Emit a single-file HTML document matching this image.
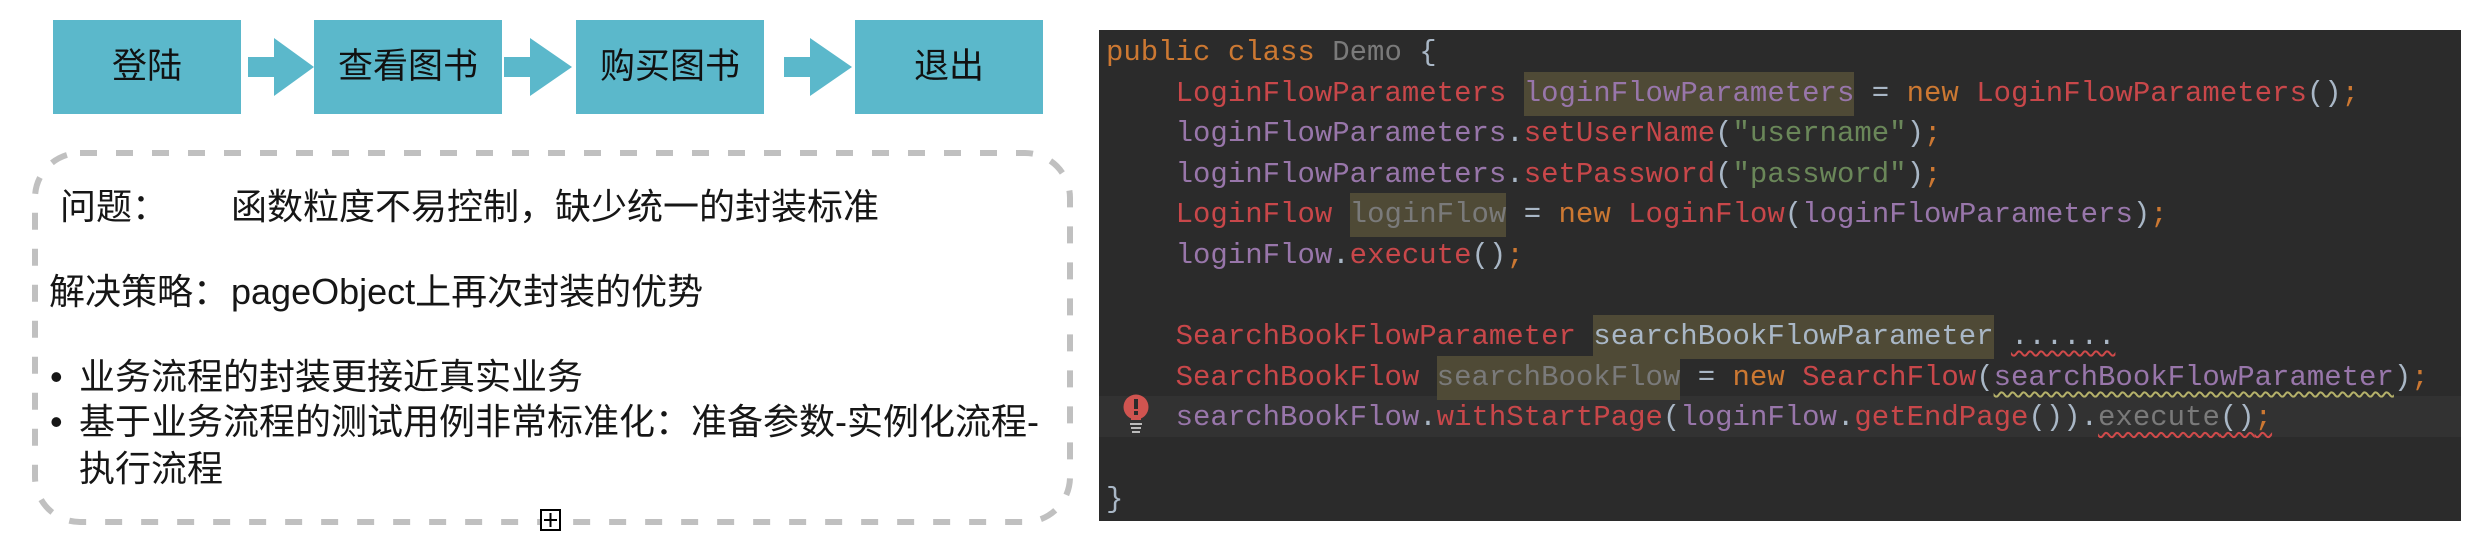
<!DOCTYPE html>
<html><head><meta charset="utf-8"><style>
body{margin:0;width:2490px;height:554px;background:#fff;position:relative;overflow:hidden;font-family:"Liberation Sans","Noto Sans CJK SC",sans-serif;}
.box{position:absolute;top:20px;width:188px;height:94px;background:#5bb8cb;color:#111;font-size:35px;line-height:94px;text-align:center;}
.t{position:absolute;font-size:36px;color:#161616;white-space:nowrap;line-height:40px;}
#code{position:absolute;left:1099px;top:30px;width:1362px;height:491px;background:#2b2b2b;}
pre{margin:0;position:absolute;left:7px;top:3px;font-family:"Liberation Mono",monospace;font-size:29px;line-height:40.6px;color:#a9b7c6;}
.k{color:#cc7832}.c{color:#c8474a}.v{color:#9876aa}.s{color:#6a8759}.g{color:#7a7a7a}.w{color:#a9b7c6}
.h{background:#4f4a36;padding:5px 0 6px}
.wr{text-decoration:underline wavy #d04a4a;text-decoration-thickness:2px;text-underline-offset:6px}
.wy{text-decoration:underline wavy #b5b16a;text-decoration-thickness:2px;text-underline-offset:6px}
</style></head><body>
<div class="box" style="left:53px">登陆</div>
<div class="box" style="left:314px">查看图书</div>
<div class="box" style="left:576px">购买图书</div>
<div class="box" style="left:855px">退出</div>
<svg width="1100" height="554" style="position:absolute;left:0;top:0">
<g fill="#5bb8cb">
<polygon points="248,57 274,57 274,38 314,67 274,96 274,77 248,77"/>
<polygon points="504,57 530,57 530,38 572,67 530,96 530,77 504,77"/>
<polygon points="784,57 810,57 810,38 852,67 810,96 810,77 784,77"/>
</g>
<rect x="35" y="153" width="1035" height="369" rx="45" fill="none" stroke="#c0c0c0" stroke-width="6" stroke-dasharray="17 19"/>
<rect x="541" y="510" width="19" height="20" fill="#fff" stroke="#000" stroke-width="2"/>
<path d="M550.5 513v14M544 520h13" stroke="#000" stroke-width="2"/>
</svg>
<div class="t" style="left:60px;top:187px">问题：</div>
<div class="t" style="left:231px;top:187px">函数粒度不易控制，缺少统一的封装标准</div>
<div class="t" style="left:49px;top:272px">解决策略：</div>
<div class="t" style="left:231px;top:272px">pageObject上再次封装的优势</div>
<div class="t" style="left:50px;top:357px">•</div>
<div class="t" style="left:79px;top:357px">业务流程的封装更接近真实业务</div>
<div class="t" style="left:50px;top:402px">•</div>
<div class="t" style="left:79px;top:402px">基于业务流程的测试用例非常标准化：准备参数-实例化流程-</div>
<div class="t" style="left:79px;top:449px">执行流程</div>
<div id="code">
<div style="position:absolute;left:0;top:366px;width:1362px;height:41px;background:#323232"></div>
<svg width="30" height="40" style="position:absolute;left:24px;top:364px">
<circle cx="13" cy="13" r="12.5" fill="#d05450"/><path d="M8 20h10v6H8z" fill="#d05450"/>
<rect x="11" y="5" width="4" height="10" fill="#2b2b2b"/><rect x="11" y="17" width="4" height="4" fill="#2b2b2b"/>
<rect x="7" y="29" width="12" height="2" fill="#bbb"/><rect x="8" y="33" width="10" height="2" fill="#bbb"/><rect x="9" y="37" width="8" height="2" fill="#bbb"/>
</svg>
<pre><span class="k">public class</span> <span class="g">Demo</span> {
    <span class="c">LoginFlowParameters</span> <span class="h v">loginFlowParameters</span> = <span class="k">new</span> <span class="c">LoginFlowParameters</span>()<span class="k">;</span>
    <span class="v">loginFlowParameters</span>.<span class="c">setUserName</span>(<span class="s">"username"</span>)<span class="k">;</span>
    <span class="v">loginFlowParameters</span>.<span class="c">setPassword</span>(<span class="s">"password"</span>)<span class="k">;</span>
    <span class="c">LoginFlow</span> <span class="h g">loginFlow</span> = <span class="k">new</span> <span class="c">LoginFlow</span>(<span class="v">loginFlowParameters</span>)<span class="k">;</span>
    <span class="v">loginFlow</span>.<span class="c">execute</span>()<span class="k">;</span>

    <span class="c">SearchBookFlowParameter</span> <span class="h w">searchBookFlowParameter</span> <span class="wr">......</span>
    <span class="c">SearchBookFlow</span> <span class="h g">searchBookFlow</span> = <span class="k">new</span> <span class="c">SearchFlow</span>(<span class="v wy">searchBookFlowParameter</span>)<span class="k">;</span>
    <span class="v">searchBookFlow</span>.<span class="c">withStartPage</span>(<span class="v">loginFlow</span>.<span class="c">getEndPage</span>()).<span class="wr"><span class="g">execute</span>()<span class="k">;</span></span>

}</pre>
</div>
</body></html>
